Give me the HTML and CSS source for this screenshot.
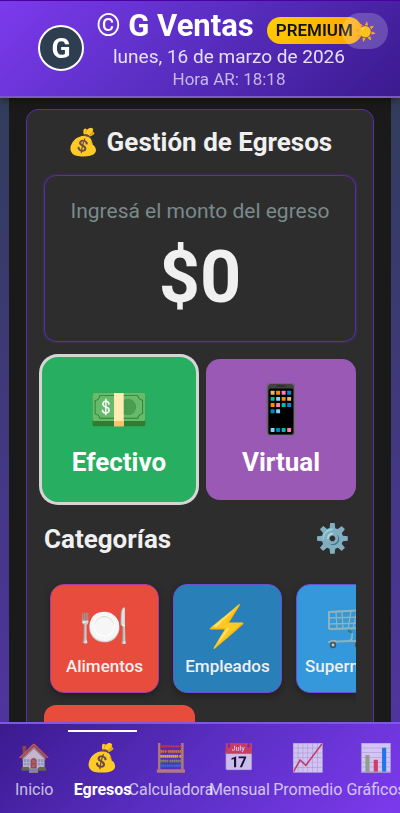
FILE: index.html
```html
<!DOCTYPE html>
<html lang="es">
<head>
<meta charset="utf-8">
<meta name="viewport" content="width=device-width, initial-scale=1">
<title>G Ventas</title>
<link rel="stylesheet" href="styles.css">
</head>
<body>
<header class="header">
  <div class="logo">G</div>
  <div class="heading">
    <div class="title-row">
      <h1 class="brand"><span class="mark">©</span> G Ventas</h1>
      <span class="premium">PREMIUM</span>
    </div>
    <p class="date">lunes, 16 de marzo de 2026</p>
    <p class="clock">Hora AR: 18:18</p>
  </div>
  <button class="theme" type="button" aria-label="Cambiar tema"><span class="emoji">☀️</span></button>
</header>
<main class="content">
  <section class="card">
    <h2 class="card-title"><span class="emoji">💰</span> Gestión de Egresos</h2>
    <div class="amount">
      <p class="hint">Ingresá el monto del egreso</p>
      <p class="value">$0</p>
    </div>
    <div class="methods">
      <button class="method cash selected" type="button"><span class="emoji">💵</span>Efectivo</button>
      <button class="method virtual" type="button"><span class="emoji">📱</span>Virtual</button>
    </div>
    <div class="section-head">
      <h3>Categorías</h3>
      <button class="gear" type="button" aria-label="Configurar categorías"><span class="emoji">⚙️</span></button>
    </div>
    <div class="categories">
      <button class="category food" type="button"><span class="emoji">🍽️</span><span class="name">Alimentos</span></button>
      <button class="category staff" type="button"><span class="emoji">⚡</span><span class="name">Empleados</span></button>
      <button class="category market" type="button">
        <svg class="cart" viewBox="0 0 48 56" fill="none" aria-hidden="true">
          <path d="M2 13 40 11M2 19 38 18M2 25 37 24M2 30 36 29M2 13V30M9 13 10 30M15 13 16 30M24 12 21 30M30 12 26 30M36 12 31 30" stroke="#8fb3b8" stroke-width="1.3"/>
          <path d="M2 30V13L40 11M2 30 36 29 42 8H47" stroke="#8fb3b8" stroke-width="2"/>
          <path d="M21 31 25 34" stroke="#2f7f86" stroke-width="2.4"/>
          <path d="M25 34Q26 41 22 42L1 43M22 42H38" stroke="#86b2c2" stroke-width="1.8"/>
          <path d="M2 43 4 41H9L10 44" fill="#8fb3b8"/>
          <circle cx="6" cy="46" r="3.2" fill="#465560"/><circle cx="6" cy="46" r="1.4" fill="#c3cdd0"/>
          <circle cx="31" cy="46" r="3.2" fill="#465560"/><circle cx="31" cy="46" r="1.4" fill="#c3cdd0"/>
        </svg>
        <span class="name">Supermercado</span>
      </button>
    </div>
    <div class="actions">
      <button class="action" type="button" aria-label="Borrar"></button>
    </div>
  </section>
</main>
<nav class="nav">
  <a class="tab" href="#inicio"><span class="emoji">🏠</span><span class="label">Inicio</span></a>
  <a class="tab active" href="#egresos"><span class="emoji">💰</span><span class="label">Egresos</span></a>
  <a class="tab" href="#calculadora"><span class="emoji">🧮</span><span class="label">Calculadora</span></a>
  <a class="tab" href="#mensual"><span class="emoji">📅</span><span class="label">Mensual</span></a>
  <a class="tab" href="#promedio"><span class="emoji">📈</span><span class="label">Promedio</span></a>
  <a class="tab" href="#graficos"><span class="emoji">📊</span><span class="label">Gráficos</span></a>
</nav>
</body>
</html>
```
FILE: styles.css
```css
* { box-sizing: border-box; }

body {
  margin: 0;
  height: 100vh;
  display: flex;
  flex-direction: column;
  overflow: hidden;
  font-family: Roboto, "Noto Color Emoji", sans-serif;
  color: #f0f0f0;
  background: linear-gradient(180deg, #2c3e50, #5433a8);
}

h1, h2, h3, p { margin: 0; }

button {
  font-family: inherit;
  color: inherit;
  border: 0;
  padding: 0;
  cursor: pointer;
}

.emoji { font-family: "Noto Color Emoji", sans-serif; font-weight: 400; }

.header {
  position: relative;
  z-index: 1;
  flex: none;
  display: flex;
  align-items: center;
  justify-content: center;
  gap: 12px;
  padding: 5px 0 6px;
  border-top: 1px solid #4b00a0;
  border-bottom: 2px solid #7a58c8;
  background: linear-gradient(135deg, #7c3aed, #5b2fc4 45%, #3b1a8f);
  box-shadow: 0 2px 8px rgba(0, 0, 0, .4);
}

.logo {
  width: 46px;
  height: 46px;
  display: grid;
  place-items: center;
  border: 2px solid #fff;
  border-radius: 50%;
  background: #2c3e50;
  color: #fff;
  font-size: 28px;
  font-weight: 700;
}

.heading { text-align: center; }

.title-row {
  display: flex;
  align-items: center;
  gap: 13px;
  height: 40px;
}

.brand {
  font-size: 31px;
  line-height: 40px;
  font-weight: 700;
  color: #fff;
  white-space: nowrap;
}

.mark { font-weight: 400; }

.premium {
  margin-top: 9px;
  padding: 0 9px;
  border-radius: 14px;
  background: linear-gradient(135deg, #ffd000, #ff9f00);
  color: #111;
  font-size: 17px;
  line-height: 27px;
  font-weight: 600;
}

.date { font-size: 19px; line-height: 22px; color: #e6dffa; }
.clock { font-size: 17px; line-height: 22px; color: #c6b8ea; }

.theme {
  position: absolute;
  top: 12px;
  right: 12px;
  width: 46px;
  height: 36px;
  border-radius: 18px;
  background: rgba(255, 255, 255, .2);
  font-size: 18px;
  text-align: left;
  padding-left: 12px;
}

.content {
  flex: 1;
  min-height: 0;
  margin: 0 9px;
  padding: 11px 17px;
  overflow: hidden auto;
  scrollbar-width: none;
  background: #1a1a1a;
}

.card {
  padding: 16px 17px;
  border: 1px solid #5b2fa8;
  border-radius: 12px;
  background: #2d2d2d;
}

.card-title {
  margin-bottom: 17px;
  font-size: 26px;
  line-height: 32px;
  font-weight: 700;
  text-align: center;
  white-space: nowrap;
}

.amount {
  padding: 20px 16px 12px;
  border: 1px solid #5b2fa8;
  border-radius: 12px;
  box-shadow: 0 0 3px rgba(91, 47, 168, .7);
  text-align: center;
}

.hint { font-size: 21px; line-height: 30px; color: #7a8a8b; white-space: nowrap; }
.value { font-size: 72px; line-height: 103px; font-weight: 700; }

.methods {
  display: grid;
  grid-template-columns: 1fr 1fr;
  gap: 12px;
  margin-top: 17px;
}

.method {
  height: 141px;
  display: flex;
  flex-direction: column;
  align-items: center;
  justify-content: center;
  padding-bottom: 8px;
  border-radius: 14px;
  font-size: 26px;
  line-height: 32px;
  font-weight: 700;
  color: #fff;
}

.method .emoji { font-size: 48px; line-height: 72px; }
.cash { background: #27ae60; }
.virtual { background: #9b59b6; }
.selected { box-shadow: 0 0 0 2px #27ae60, 0 0 0 5px #d5d5d5; }

.section-head {
  display: flex;
  align-items: center;
  justify-content: space-between;
  margin-top: 16px;
  padding-right: 6px;
  height: 46px;
}

.section-head h3 { font-size: 26px; line-height: 32px; font-weight: 700; }
.gear { background: none; font-size: 28px; line-height: 36px; }

.categories {
  display: flex;
  gap: 14px;
  padding: 22px 6px 12px;
  overflow: auto hidden;
  scrollbar-width: none;
}

.category {
  flex: none;
  width: 109px;
  height: 109px;
  display: flex;
  flex-direction: column;
  align-items: center;
  justify-content: center;
  padding: 0 8px 2px;
  border: 1px solid #6a4fd8;
  border-radius: 14px;
  box-shadow: 0 3px 8px rgba(0, 0, 0, .3);
  font-size: 17px;
  line-height: 22px;
  font-weight: 500;
}

.name {
  max-width: 100%;
  overflow: hidden;
  text-overflow: ellipsis;
  white-space: nowrap;
}

.category .emoji { font-size: 40px; line-height: 56px; }
.cart { width: 48px; height: 56px; }
.food { background: #e74c3c; border-color: #a83ca0; }
.staff { background: #2980b9; }
.market { background: #3498db; }

.action {
  display: block;
  width: 151px;
  height: 56px;
  border-radius: 12px;
  background: #e74c3c;
}

.nav {
  position: relative;
  z-index: 1;
  flex: none;
  display: flex;
  height: 91px;
  overflow: hidden;
  border-top: 2px solid #8058d8;
  background: linear-gradient(135deg, #3b1a8f, #5b2fc4 50%, #7c3aed);
}

.tab {
  flex: 0 0 17.1%;
  min-width: 0;
  display: flex;
  flex-direction: column;
  align-items: center;
  margin-top: 6px;
  padding-top: 8px;
  border-top: 2px solid transparent;
  color: #fff;
  text-decoration: none;
  font-size: 16px;
  line-height: 24px;
  white-space: nowrap;
}

.tab .emoji { font-size: 27px; line-height: 36px; }
.tab .label { padding-top: 2px; }
.tab .emoji, .tab .label { opacity: .7; }
.active { border-top-color: #fff; font-weight: 700; }
.active .emoji, .active .label { opacity: 1; }
```
